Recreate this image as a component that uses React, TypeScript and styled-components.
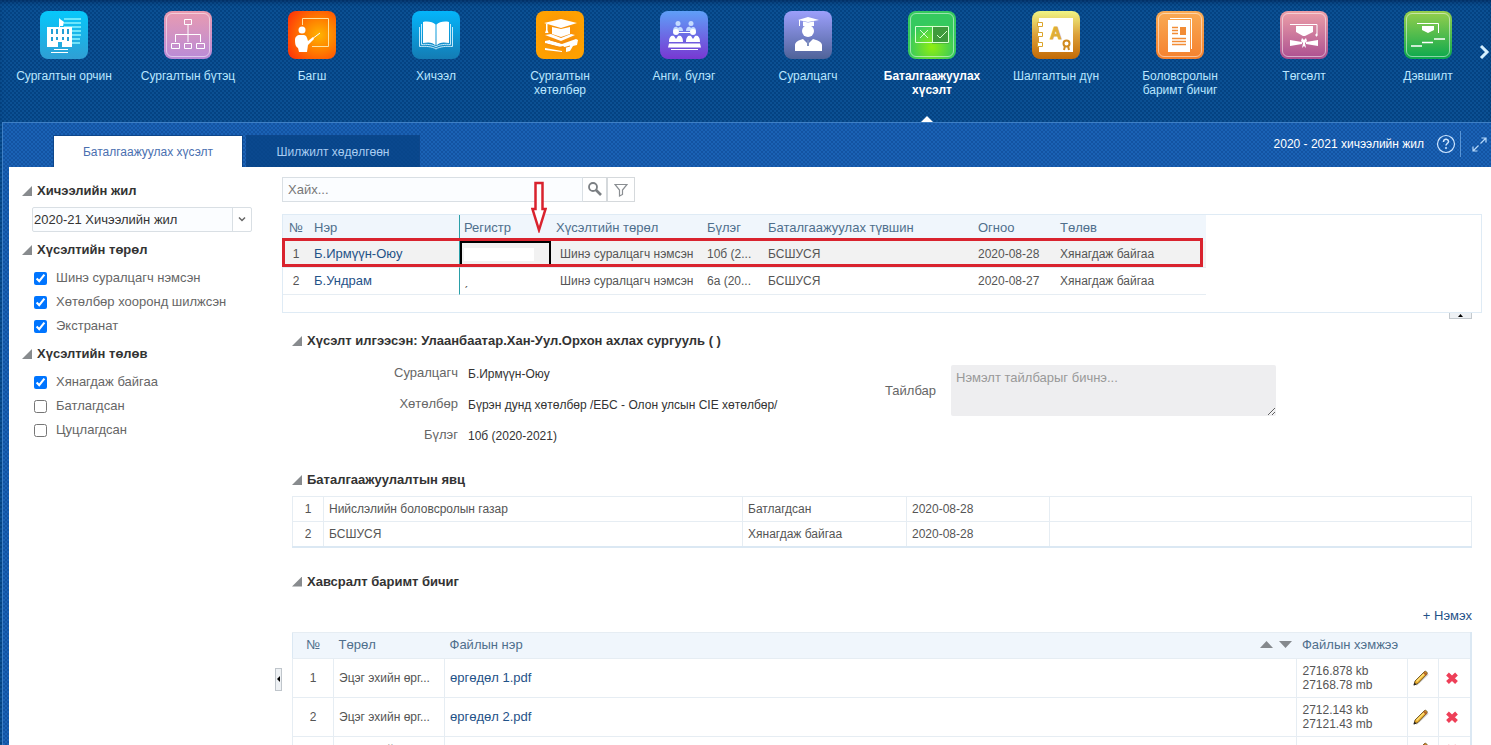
import React from "react";
import styled, { createGlobalStyle, css } from "styled-components";

const GlobalStyle = createGlobalStyle`
  * { box-sizing: border-box; }
  body { margin: 0; background: #fff; }
  body, button, input, select, textarea { font-family: "Liberation Sans", Arial, sans-serif; }
`;

const weave = css`
  background-image: repeating-conic-gradient(rgba(0, 20, 60, 0.12) 0 25%, rgba(90, 170, 240, 0.07) 0 50%);
  background-size: 4px 4px;
`;

const Shell = styled.div`
  display: flex;
  flex-direction: column;
  height: 100vh;
  overflow: hidden;
  color: #555;
  font-size: 12px;
  line-height: 14px;
  background-color: #05498c;
  ${weave}
`;

/* ---------- top navigation ---------- */

const Nav = styled.nav`
  position: relative;
  flex: none;
  display: flex;
  height: 122px;
  padding-left: 2px;
  overflow: hidden;
  box-shadow: inset 0 4px 4px -2px rgba(0, 20, 60, 0.5);
`;

const NavItem = styled.a<{ $active?: boolean }>`
  position: relative;
  flex: none;
  display: flex;
  flex-direction: column;
  align-items: center;
  gap: 10px;
  width: 124px;
  padding: 11px 10px 0;
  color: ${(p) => (p.$active ? "#fff" : "#b9e6ff")};
  font-weight: ${(p) => (p.$active ? "bold" : "normal")};
  text-align: center;
  text-decoration: none;
  ${(p) =>
    p.$active &&
    css`
      &::after {
        content: "";
        position: absolute;
        left: calc(50% - 11px);
        bottom: 0;
        border: 6px solid transparent;
        border-top: 0;
        border-bottom-color: #fff;
      }
    `}
`;

const Tile = styled.span<{ $bg: string; $ring?: boolean }>`
  position: relative;
  display: block;
  width: 48px;
  height: 48px;
  border-radius: 8px;
  background: ${(p) => p.$bg};
  &::after {
    content: "";
    position: absolute;
    inset: 2px;
    border-radius: 6px;
    border: ${(p) => (p.$ring ? "1px solid rgba(255,255,255,.5)" : "0")};
  }
  svg { display: block; }
`;

const NextButton = styled.button`
  position: absolute;
  right: 0;
  top: 40px;
  width: 14px;
  height: 24px;
  padding: 0;
  border: 0;
  background: none;
  svg { display: block; }
`;

/* ---------- page panel ---------- */

const Panel = styled.div`
  flex: 1;
  min-height: 0;
  display: flex;
  flex-direction: column;
  margin-left: 2px;
  padding-left: 6px;
  border-top: 1px solid #3f7fc4;
  border-left: 1px solid #3f7fc4;
  background-color: #165cb0;
  ${weave}
`;

const PanelBar = styled.header`
  flex: none;
  display: flex;
  align-items: flex-end;
  height: 44px;
  padding-left: 44px;
`;

const Tab = styled.button<{ $active?: boolean }>`
  height: 32px;
  width: ${(p) => (p.$active ? 190 : 174)}px;
  margin-right: 3px;
  padding: 0;
  border: 1px solid #0d478c;
  border-bottom: 0;
  background: ${(p) => (p.$active ? "#fff" : "rgba(6, 66, 132, .8)")};
  color: ${(p) => (p.$active ? "#4a6fb0" : "#a9cdf2")};
  font-size: 12px;
`;

const BarTools = styled.div`
  display: flex;
  align-items: center;
  height: 46px;
  margin-left: auto;
  padding-right: 4px;
  color: #fff;
`;

const BarIcon = styled.button`
  display: flex;
  padding: 0;
  border: 0;
  background: none;
`;

const HelpButton = styled(BarIcon)`
  margin: 0 4px 0 12px;
`;

const ExpandButton = styled(BarIcon)`
  align-items: center;
  height: 26px;
  padding-left: 11px;
  border-left: 1px solid #5b96d6;
`;

const Work = styled.div`
  flex: 1;
  min-height: 0;
  overflow: auto;
  scrollbar-width: none;
  background: #fff;
`;

const Columns = styled.div`
  display: flex;
  min-height: 1024px;
`;

const Splitter = styled.div`
  flex: none;
  display: flex;
  align-items: center;
  width: 7px;
`;

const Grip = styled.button`
  display: flex;
  align-items: center;
  justify-content: center;
  width: 7px;
  height: 23px;
  padding: 0;
  border: 1px solid #bfc5cb;
  background: #eef1f4;
  svg { flex: none; }
`;

/* ---------- filters ---------- */

const Sidebar = styled.aside`
  flex: none;
  width: 266px;
  padding: 14px 12px 14px 13px;
`;

const HeadingRow = styled.h2<{ $gap?: number }>`
  display: flex;
  align-items: center;
  gap: 5px;
  height: 20px;
  margin: 0 0 ${(p) => p.$gap ?? 0}px;
  color: #333;
  font-size: 13px;
  line-height: 20px;
  &::before {
    content: "";
    width: 10px;
    height: 10px;
    background: #888b8e;
    clip-path: polygon(100% 0, 100% 100%, 0 100%);
  }
`;

const RequestTitle = styled(HeadingRow)`
  margin: 18px 0 6px;
`;

const SelectBox = styled.div`
  position: relative;
  width: 220px;
  margin: 6px 0 8px 10px;
  svg { position: absolute; right: 6px; top: 8px; pointer-events: none; }
  &::after {
    content: "";
    position: absolute;
    right: 19px;
    top: 0;
    bottom: 0;
    border-left: 1px solid #d9dfe4;
  }
`;

const Select = styled.select`
  appearance: none;
  display: block;
  width: 100%;
  height: 25px;
  padding: 0 20px 0 1px;
  border: 1px solid #d9dfe4;
  border-radius: 2px;
  background: linear-gradient(90deg, #fbfdff 200px, #fff 0);
  color: #333;
  font-size: 13px;
`;

const CheckList = styled.div`
  display: flex;
  flex-direction: column;
  padding: 6px 0 6px 12px;
`;

const Check = styled.label`
  display: flex;
  align-items: center;
  gap: 9px;
  height: 24px;
  color: #666;
  font-size: 13px;
  input { width: 13px; height: 13px; margin: 0; accent-color: #0075ff; }
`;

/* ---------- main area ---------- */

const Main = styled.main`
  flex: 1;
  min-width: 0;
  padding: 10px 9px 0 0;
`;

const SearchRow = styled.div`
  display: flex;
  height: 25px;
  margin-bottom: 12px;
`;

const SearchInput = styled.input`
  width: 301px;
  padding: 0 5px;
  border: 1px solid #d9dfe4;
  background: #fbfdff;
  font-size: 13px;
  &::placeholder { color: #777; }
`;

const SearchButton = styled.button<{ $wide?: boolean }>`
  display: flex;
  align-items: center;
  justify-content: center;
  width: ${(p) => (p.$wide ? 28 : 24)}px;
  padding: 0;
  border: 1px solid #d5d9dc;
  border-left-width: ${(p) => (p.$wide ? 1 : 0)}px;
  background: #fff;
`;

const GridBox = styled.div`
  position: relative;
  height: 99px;
  border: 1px solid #dfebf5;
`;

const Requests = styled.table`
  table-layout: fixed;
  width: 923px;
  border-collapse: separate;
  border-spacing: 0;
  th, td {
    padding: 0 5px;
    text-align: left;
    white-space: nowrap;
    overflow: hidden;
  }
  th {
    height: 26px;
    background: #f0f6fc;
    color: #4f6f8c;
    font-size: 13px;
    font-weight: normal;
  }
  td { height: 27px; border-bottom: 1px solid #e6edf3; }
  td:nth-child(4) { padding-left: 9px; }
  td:first-child, th:first-child { padding: 0; text-align: center; }
  th:nth-child(3), td:nth-child(3) { padding-left: 4px; border-left: 1px solid #2a9fa8; }
`;

const RequestRow = styled.tr<{ $selected?: boolean }>`
  background: ${(p) => (p.$selected ? "#f2f2f2" : "#fff")};
`;

const FocusCell = styled.td`
  box-shadow: inset 0 0 0 2px #000;
`;

const Redacted = styled.span`
  display: block;
  width: 70px;
  height: 13px;
  background: #fff;
`;

const Link = styled.a`
  color: #1f5288;
  font-size: 13px;
  text-decoration: none;
`;

const Marker = styled.div`
  position: absolute;
  left: -1px;
  top: 23px;
  width: 921px;
  height: 29px;
  border: 3px solid #d9232e;
  pointer-events: none;
`;

const Arrow = styled.svg`
  position: absolute;
  left: 248px;
  top: -34px;
`;

const Collapse = styled.button`
  position: absolute;
  right: 9px;
  top: 98px;
  display: flex;
  justify-content: center;
  width: 23px;
  height: 6px;
  padding: 0;
  border: 1px solid #c3c9ce;
  border-top: 0;
  background: #eef1f4;
`;

const Section = styled.section`
  padding: 0 10px;
`;

const Details = styled.div`
  display: flex;
  gap: 77px;
  padding-bottom: 20px;
`;

const Fields = styled.dl`
  display: grid;
  grid-template-columns: 166px 340px;
  column-gap: 10px;
  grid-auto-rows: 31px;
  align-items: center;
  margin: 0;
  dt { text-align: right; font-size: 13px; color: #666; }
  dd { margin: 0; padding-top: 2px; color: #333; }
`;

const Comment = styled.div`
  display: flex;
  align-items: center;
  align-self: flex-start;
  gap: 15px;
  padding-top: 8px;
  label { font-size: 13px; color: #666; }
`;

const TextArea = styled.textarea`
  width: 325px;
  height: 51px;
  padding: 5px;
  border: 0;
  border-radius: 2px;
  background: #eeeef0;
  font-size: 13px;
  &::placeholder { color: #999; }
`;

const Ruled = styled.table`
  table-layout: fixed;
  width: 100%;
  border-collapse: collapse;
  border: 1px solid #dbe8f3;
  td, th {
    padding: 0 5px;
    border: 1px solid #e6edf3;
    text-align: left;
    font-weight: normal;
  }
  td:first-child, th:first-child { padding: 0; text-align: center; }
`;

const Progress = styled(Ruled)`
  border-bottom: 2px solid #dbe8f3;
  margin-bottom: 24px;
  td { height: 25px; }
`;

const Files = styled(Ruled)`
  border-right: 2px solid #dbe8f3;
  th {
    height: 26px;
    border-left: 0;
    border-right: 0;
    background: #f0f6fc;
    color: #4f6f8c;
    font-size: 13px;
  }
  td { padding: 5px; }
`;

const FileHead = styled.div`
  display: flex;
  justify-content: space-between;
  align-items: center;
`;

const AddRow = styled.div`
  display: flex;
  justify-content: flex-end;
  padding: 17px 0 9px;
`;

const IconButton = styled.button`
  display: flex;
  padding: 0;
  border: 0;
  background: none;
`;

/* ---------- drawings ---------- */

const art = { width: 48, height: 48, viewBox: "0 0 48 48", fill: "none", stroke: "#fff" } as const;

const School = () => (
  <svg {...art}>
    <g stroke="#8df3ff" strokeWidth="1.6"><path d="M24 8h17M24 12h17M24 16h17M30 20h11M30 24h11M30 28h10M30 32h10" /></g>
    <g stroke="none" fill="#fff"><path d="M7 16h25v20H22v-5h-4v5H7zM19 7l1 1v8h-1z" /><path d="M20 8l4 3-1 4h-3z" /></g>
    <g stroke="#239fd6" strokeWidth="2"><path d="M12 18v5M17 18v5M23 18v5M28 18v5M12 26v4M17 26v3M23 26v3M28 26v4" /></g>
    <path d="M14 38.500h14M11 41.500h17" />
  </svg>
);
const Structure = () => (
  <svg {...art}>
    <path d="M20.500 8.500h7v5h-7zM24 14v17M11.500 31v-7.500h25V31M7.500 32.500h8v5h-8zM20.500 32.500h7v5h-7zM32.500 32.500h8v5h-8z" />
  </svg>
);
const Teacher = () => (
  <svg {...art}>
    <path d="M14.500 14V7.500h26v28H24" stroke="#ffe2a0" />
    <g stroke="none" fill="#fff"><circle cx="14" cy="19" r="3.500" /><path d="M7 29c0-3 2-5 5-5h4c2 0 3 2 4 6l5-4 1 2-6 6-1 7h-8l-1-4c-2-1-3-3-3-8z" /></g>
    <path d="M24 28l8-6" />
  </svg>
);
const Book = () => (
  <svg {...art}>
    <path d="M7.500 16v19.500c6-.5 13 0 16.500 2.500 3.500-2.500 10.500-3 16.500-2.500V16M9.500 13v20.500c5-.5 12 0 14.500 2.500 2.500-2.500 9.500-3 14.500-2.500V13" stroke="#d9f3ff" strokeWidth=".9" />
    <path d="M11 11c5-1 10 0 12.500 2.500v21C21 31 16 31 11 32zM37 11c-5-1-10 0-12.500 2.500v21C27 31 32 31 37 32z" fill="#fff" stroke="none" />
  </svg>
);
const Program = () => (
  <svg {...art}>
    <g fill="#fff" stroke="none">
      <path d="M8 12l17-4 16 4-16 5z" /><path d="M16 16l9 2 9-2v7l-9 3-9-3z" />
      <path d="M9 24l6-1 10 4 10-4 4 1-14 6z" />
      <path d="M9 30l5-1 12 4 14-5 2 1-1 5-4 1-3 5-4 1v-4l-3-2-4 1-14-4z" />
      <path d="M9 37l17 3v1L9 39zM10 13h1.500v6l1 3h-3.500l1-3z" />
    </g>
    <path d="M14 29l11 3 14-5M10 33l17 4 7-2M29 36v4" stroke="#f28c12" />
  </svg>
);
const Group = () => (
  <svg {...art}>
    <g fill="#c5dcff" stroke="none"><circle cx="18" cy="12.500" r="2.500" /><circle cx="31" cy="12.500" r="2.500" /><path d="M13 20c0-5 4-5 5-3 2-2 5-1 5 3zM26 20c0-5 4-5 5-3 2-2 5-1 5 3z" /></g>
    <g fill="#fff" stroke="none"><circle cx="16" cy="21" r="3" /><circle cx="33" cy="21" r="3" /><path d="M9 31c0-6 3-7 5-6l2 3 2-3c2-1 5 0 5 6zM26 31c0-6 3-7 5-6l2 3 2-3c2-1 5 0 5 6zM9 32.500h31l1 4H8z" /></g>
    <path d="M19 21.500h11M11 38.500h27" />
  </svg>
);
const Student = () => (
  <svg {...art}>
    <g fill="#fff" stroke="none">
      <path d="M14 9l10-3 11 3-11 2z" /><path d="M19 10.500l5 1 6-1V15H19z" /><path d="M15 9h1v6h-1z" />
      <circle cx="24" cy="20" r="6" /><path d="M11 40v-6c0-3 4-5 8-6l5 5 5-5c4 1 9 3 9 6v6z" />
    </g>
    <path d="M24 29v6" stroke="#7f8fc0" strokeWidth="2" />
  </svg>
);
const Approve = () => (
  <svg {...art} stroke="#d9ffd0">
    <path d="M24 15.500h17v17H24z" fill="#3f9a3c" stroke="none" />
    <path d="M7.500 15.500h33v16h-33zM24.500 15.500v16M12 19l8 8M20 19l-8 8M29 24l3 3 7-7" />
  </svg>
);
const LetterA = styled.text`
  font: bold 16px "Liberation Sans", Arial, sans-serif;
`;
const Exam = () => (
  <svg {...art}>
    <path d="M7 7h34v34H7z" fill="#fff" stroke="none" />
    <g fill="#fff" stroke="#dba52b"><path d="M5.500 11.500h5v4h-5zM5.500 21.500h5v4h-5zM5.500 31.500h5v4h-5z" /></g>
    <LetterA x="18" y="28" fill="#dfae35" stroke="#dfae35">A</LetterA>
    <circle cx="34.500" cy="32.500" r="3" stroke="#d08a1e" strokeWidth="2" />
    <path d="M33 35l-1 4M36 35l1 4" stroke="#d08a1e" strokeWidth="2" />
  </svg>
);
const Document = () => (
  <svg {...art}>
    <path d="M14 7.500h21.500V38" />
    <path d="M12 9h22v32H12z" fill="#fff" stroke="none" />
    <path d="M16 16.500h6M16 19.500h6M16 22.500h6M16 27.500h14M16 30.500h14M16 33.500h14" stroke="#f28c35" strokeWidth="1.500" />
    <path d="M24 16h6v8h-6z" fill="#f28c35" stroke="none" />
  </svg>
);
const Graduate = () => (
  <svg {...art}>
    <path d="M10 13.500h27v10" /><path d="M16 15h17v6l-8 4h-2l-7-4z" fill="#fff" stroke="none" />
    <path d="M36 23h1v2h-1z" fill="#fff" />
    <path d="M10 29l12 2v2l-12 2zM38 29l-12 2v2l12 2zM22 27l2 2 2-2 1 3-2 2 1 5-2-2-2 2 1-5-2-2z" fill="#fff" stroke="none" />
  </svg>
);
const Promote = () => (
  <svg {...art}>
    <path d="M13 12.500h21.500V22" /><path d="M18 15h12v4l-6 3-6-3z" fill="#fff" stroke="none" />
    <path d="M7 35h11M18 31.500h11M30 28h11" strokeWidth="1.600" />
  </svg>
);

const Pencil = () => (
  <svg width="16" height="16" viewBox="0 0 16 16">
    <path d="M3 15L15 4" stroke="#aaa" strokeWidth="2" opacity=".5" />
    <path d="M1 15l1-4L11.500 1.500c1-1 3.500 1 2.500 2.500L5 13.500z" fill="#e8ab2c" stroke="#5a4216" strokeWidth=".8" />
    <path d="M3.500 11.500l8-8" stroke="#ffe27a" strokeWidth="1.500" />
    <path d="M11 2.500l2.500 2.500" stroke="#b5652a" strokeWidth="2" />
    <path d="M.5 15.500l1-3 2 2z" fill="#222" />
  </svg>
);
const Cross = () => (
  <svg width="16" height="16" viewBox="0 0 16 16">
    <path d="M3.500 4l9 8.500M12.500 4l-9 8.500" stroke="#ee3f58" strokeWidth="4" />
  </svg>
);

const navItems = [
  { label: "Сургалтын орчин", icon: <School />, bg: "linear-gradient(#06c8fb, #2f9fd4)" },
  { label: "Сургалтын бүтэц", icon: <Structure />, bg: "linear-gradient(#e99bb0, #b98bd8)", ring: true },
  { label: "Багш", icon: <Teacher />, bg: "radial-gradient(circle at 65% 50%, #ffb400, #ff7a00 45%, #ff2a0a)" },
  { label: "Хичээл", icon: <Book />, bg: "linear-gradient(#04b5fb, #147cb4)" },
  { label: "Сургалтын хөтөлбөр", icon: <Program />, bg: "radial-gradient(#f58a10, #ffa000 70%)" },
  { label: "Анги, бүлэг", icon: <Group />, bg: "linear-gradient(#5f9ff8, #7838d2)" },
  { label: "Суралцагч", icon: <Student />, bg: "linear-gradient(#9c9ffb, #4f6399)" },
  { label: "Баталгаажуулах хүсэлт", icon: <Approve />, bg: "radial-gradient(circle at 50% 75%, #8fee10, #35c95e 55%)", ring: true, active: true },
  { label: "Шалгалтын дүн", icon: <Exam />, bg: "linear-gradient(#f0f584, #dca03a 50%, #c26a05)" },
  { label: "Боловсролын баримт бичиг", icon: <Document />, bg: "linear-gradient(#f9ab55, #f5812e)", ring: true },
  { label: "Төгсөлт", icon: <Graduate />, bg: "linear-gradient(#eda0a8, #ab4f90)", ring: true },
  { label: "Дэвшилт", icon: <Promote />, bg: "linear-gradient(#97cf4c, #0aa84e)", ring: true },
];

const requestTypes = ["Шинэ суралцагч нэмсэн", "Хөтөлбөр хооронд шилжсэн", "Экстранат"];
const requestStates = [
  { label: "Хянагдаж байгаа", on: true },
  { label: "Батлагдсан", on: false },
  { label: "Цуцлагдсан", on: false },
];

const progress = [
  ["1", "Нийслэлийн боловсролын газар", "Батлагдсан", "2020-08-28"],
  ["2", "БСШУСЯ", "Хянагдаж байгаа", "2020-08-28"],
];

const files = [
  { name: "өргөдөл 1.pdf", sizes: ["2716.878 kb", "27168.78 mb"] },
  { name: "өргөдөл 2.pdf", sizes: ["2712.143 kb", "27121.43 mb"] },
  { name: "", sizes: [] },
];

const Cols = ({ widths }: { widths: (number | undefined)[] }) => (
  <colgroup>
    {widths.map((w, i) => (
      <col key={i} width={w} />
    ))}
  </colgroup>
);

export default function App() {
  return (
    <>
      <GlobalStyle />
      <Shell>
        <Nav>
          {navItems.map((n) => (
            <NavItem key={n.label} href="#" $active={n.active}>
              <Tile $bg={n.bg} $ring={n.ring}>{n.icon}</Tile>
              {n.label}
            </NavItem>
          ))}
          <NextButton aria-label="Дараах">
            <svg width="14" height="24" viewBox="0 0 14 24" fill="none" stroke="#d5f0ff" strokeWidth="3">
              <path d="M4 6l6 6-6 6" />
            </svg>
          </NextButton>
        </Nav>

        <Panel>
          <PanelBar>
            <Tab $active>Баталгаажуулах хүсэлт</Tab>
            <Tab>Шилжилт хөдөлгөөн</Tab>
            <BarTools>
              2020 - 2021 хичээлийн жил
              <HelpButton aria-label="Тусламж">
                <svg width="20" height="20" viewBox="0 0 20 20" fill="none" stroke="#cfe6ff">
                  <circle cx="10" cy="10" r="8.500" strokeWidth="1.200" />
                  <path d="M7.500 8c0-3.500 5-3.500 5-.5 0 2-2.500 2-2.500 4M10 13v2" strokeWidth="1.500" />
                </svg>
              </HelpButton>
              <ExpandButton aria-label="Дэлгэх">
                <svg width="15" height="15" viewBox="0 0 15 15" fill="none" stroke="#b5d8fa" strokeWidth="1.200">
                  <path d="M9.500 1h4.500v4.500M14 1L8.500 6.500M5.500 14H1V9.500M1 14l5.500-5.500" />
                </svg>
              </ExpandButton>
            </BarTools>
          </PanelBar>

          <Work>
            <Columns>
              <Sidebar>
                <HeadingRow>Хичээлийн жил</HeadingRow>
                <SelectBox>
                  <Select aria-label="Хичээлийн жил">
                    <option>2020-21 Хичээлийн жил</option>
                  </Select>
                  <svg width="8" height="8" viewBox="0 0 8 8" fill="none" stroke="#666" strokeWidth="1.500">
                    <path d="M1 2.500l3 3 3-3" />
                  </svg>
                </SelectBox>
                <HeadingRow>Хүсэлтийн төрөл</HeadingRow>
                <CheckList>
                  {requestTypes.map((t) => (
                    <Check key={t}><input type="checkbox" defaultChecked />{t}</Check>
                  ))}
                </CheckList>
                <HeadingRow>Хүсэлтийн төлөв</HeadingRow>
                <CheckList>
                  {requestStates.map((s) => (
                    <Check key={s.label}><input type="checkbox" defaultChecked={s.on} />{s.label}</Check>
                  ))}
                </CheckList>
              </Sidebar>

              <Splitter>
                <Grip aria-label="Хураах">
                  <svg width="3" height="6" viewBox="0 0 3 6"><path d="M3 0v6L0 3z" fill="#000" /></svg>
                </Grip>
              </Splitter>

              <Main>
                <SearchRow>
                  <SearchInput placeholder="Хайх..." aria-label="Хайх" />
                  <SearchButton aria-label="Хайх">
                    <svg width="16" height="16" viewBox="0 0 16 16" fill="none" stroke="#7b7f83">
                      <circle cx="6" cy="5" r="4" strokeWidth="1.800" />
                      <path d="M9 8l5 5" strokeWidth="2.600" />
                    </svg>
                  </SearchButton>
                  <SearchButton $wide aria-label="Шүүх">
                    <svg width="14" height="14" viewBox="0 0 14 14" fill="none" stroke="#8a8e92" strokeWidth="1.200">
                      <path d="M1 1.500h12L8.500 7v4.500l-3 1.500V7z" />
                    </svg>
                  </SearchButton>
                </SearchRow>

                <GridBox>
                  <Requests>
                    <Cols widths={[26, 150, 92, 151, 61, 210, 82, 151]} />
                    <thead>
                      <tr>
                        <th>№</th><th>Нэр</th><th>Регистр</th><th>Хүсэлтийн төрөл</th>
                        <th>Бүлэг</th><th>Баталгаажуулах түвшин</th><th>Огноо</th><th>Төлөв</th>
                      </tr>
                    </thead>
                    <tbody>
                      <RequestRow $selected>
                        <td>1</td><td><Link href="#">Б.Ирмүүн-Оюу</Link></td>
                        <FocusCell><Redacted /></FocusCell>
                        <td>Шинэ суралцагч нэмсэн</td><td>10б (2...</td><td>БСШУСЯ</td>
                        <td>2020-08-28</td><td>Хянагдаж байгаа</td>
                      </RequestRow>
                      <RequestRow>
                        <td>2</td><td><Link href="#">Б.Ундрам</Link></td>
                        <td>ˏ</td>
                        <td>Шинэ суралцагч нэмсэн</td><td>6а (20...</td><td>БСШУСЯ</td>
                        <td>2020-08-27</td><td>Хянагдаж байгаа</td>
                      </RequestRow>
                    </tbody>
                  </Requests>
                  <Marker />
                  <Arrow width="16" height="52" viewBox="0 0 16 52">
                    <path d="M4.500 2h7v26h3L8 49 1.500 28h3z" fill="#fff" stroke="#d9232e" strokeWidth="2.500" />
                  </Arrow>
                  <Collapse aria-label="Хураах">
                    <svg width="5" height="5" viewBox="0 0 5 5"><path d="M0 4h5L2.500 1z" fill="#000" /></svg>
                  </Collapse>
                </GridBox>

                <Section>
                  <RequestTitle>Хүсэлт илгээсэн: Улаанбаатар.Хан-Уул.Орхон ахлах сургууль ( )</RequestTitle>
                  <Details>
                    <Fields>
                      <dt>Суралцагч</dt><dd>Б.Ирмүүн-Оюу</dd>
                      <dt>Хөтөлбөр</dt><dd>Бүрэн дунд хөтөлбөр /ЕБС - Олон улсын CIE хөтөлбөр/</dd>
                      <dt>Бүлэг</dt><dd>10б (2020-2021)</dd>
                    </Fields>
                    <Comment>
                      <label htmlFor="comment">Тайлбар</label>
                      <TextArea id="comment" placeholder="Нэмэлт тайлбарыг бичнэ..." />
                    </Comment>
                  </Details>

                  <HeadingRow $gap={6}>Баталгаажуулалтын явц</HeadingRow>
                  <Progress>
                    <Cols widths={[31, 419, 164, 143, undefined]} />
                    <tbody>
                      {progress.map((r) => (
                        <tr key={r[0]}>
                          {r.map((c, i) => <td key={i}>{c}</td>)}
                          <td />
                        </tr>
                      ))}
                    </tbody>
                  </Progress>

                  <HeadingRow>Хавсралт баримт бичиг</HeadingRow>
                  <AddRow><Link href="#">+ Нэмэх</Link></AddRow>
                  <Files>
                    <Cols widths={[41, 111, undefined, 111, 31, 32]} />
                    <thead>
                      <tr>
                        <th>№</th>
                        <th>Төрөл</th>
                        <th>
                          <FileHead>
                            Файлын нэр
                            <svg width="32" height="8" viewBox="0 0 32 8" fill="#85898d">
                              <path d="M0 7h13L6.500 0zM19 0h13l-6.500 7z" />
                            </svg>
                          </FileHead>
                        </th>
                        <th colSpan={3}>Файлын хэмжээ</th>
                      </tr>
                    </thead>
                    <tbody>
                      {files.map((f, i) => (
                        <tr key={i}>
                          <td>{i + 1}</td>
                          <td>Эцэг эхийн өрг...</td>
                          <td>{f.name && <Link href="#">{f.name}</Link>}</td>
                          <td>{f.sizes.map((s) => <div key={s}>{s}</div>)}</td>
                          <td><IconButton aria-label="Засах"><Pencil /></IconButton></td>
                          <td><IconButton aria-label="Устгах"><Cross /></IconButton></td>
                        </tr>
                      ))}
                    </tbody>
                  </Files>
                </Section>
              </Main>
            </Columns>
          </Work>
        </Panel>
      </Shell>
    </>
  );
}
